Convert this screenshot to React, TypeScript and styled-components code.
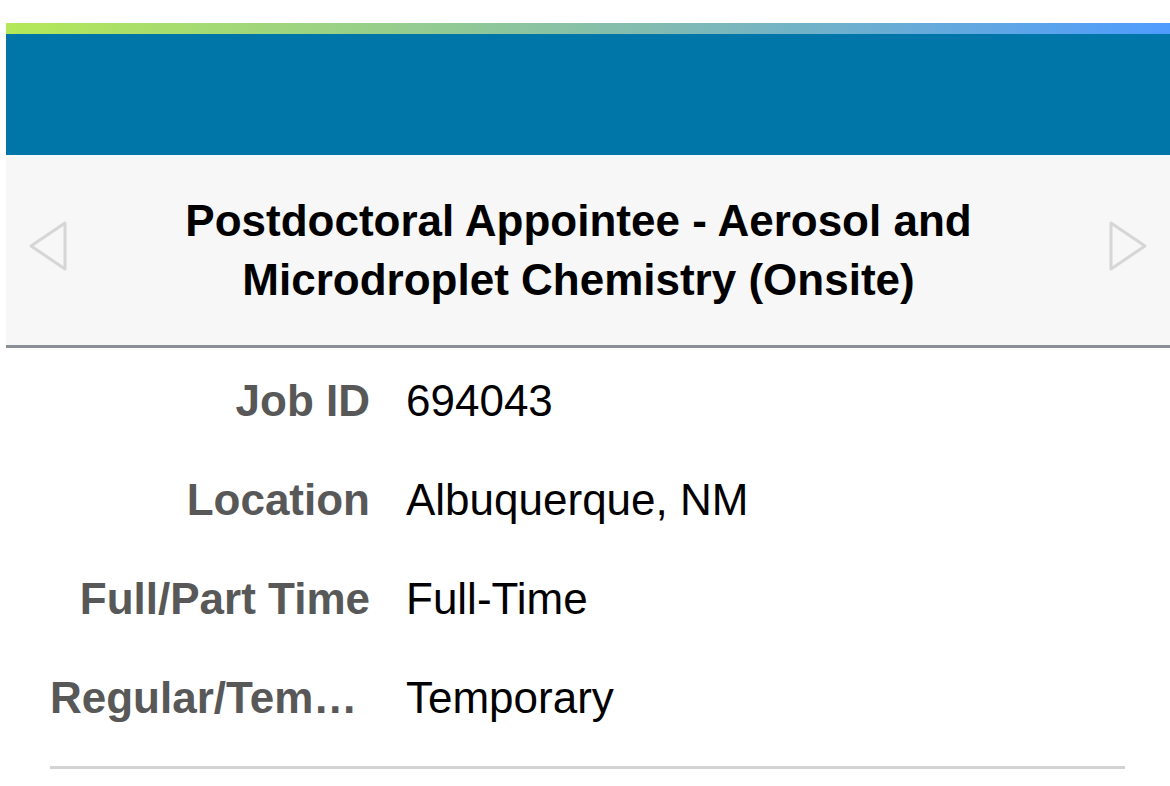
import React from 'react'
import styled, { createGlobalStyle } from 'styled-components'

const GlobalStyle = createGlobalStyle`
  html, body {
    margin: 0;
    padding: 0;
    background: #ffffff;
  }
  body {
    font-family: "Liberation Sans", Arial, Helvetica, sans-serif;
    color: #000;
  }
`

const Page = styled.div`
  padding: 23px 0 0 6px;
  width: 1170px;
  box-sizing: border-box;
`

const AccentBar = styled.div`
  height: 11px;
  background: linear-gradient(to right, #b4e858, #82bcb0 55%, #4e9cff);
`

const Banner = styled.header`
  height: 121px;
  background: #0076a8;
`

const TitlePanel = styled.section`
  display: grid;
  grid-template-columns: 94px 1fr 113px;
  align-items: center;
  height: 190px;
  background: #f7f7f7;
  border-bottom: 3px solid #8a8f96;
`

const NavArrow = styled.button<{ $offset: number }>`
  justify-self: start;
  margin-left: ${(p) => p.$offset}px;
  margin-top: -8px;
  padding: 0;
  border: 0;
  background: none;
  line-height: 0;
  cursor: pointer;
`

const Title = styled.h1`
  margin: 0;
  text-align: center;
  font-size: 44px;
  line-height: 59px;
  font-weight: 700;
  color: #000;
`

const DetailList = styled.dl`
  display: flex;
  flex-direction: column;
  gap: 49px;
  margin: 0;
  padding: 28px 44px 0 44px;
`

const Row = styled.div`
  display: grid;
  grid-template-columns: 320px 1fr;
  column-gap: 36px;
  font-size: 44px;
  line-height: 50px;
`

const Label = styled.dt`
  margin: 0;
  font-weight: 700;
  color: #585858;
  text-align: right;
  white-space: nowrap;
  overflow: hidden;
  text-overflow: ellipsis;
`

const Value = styled.dd`
  margin: 0;
  color: #000;
`

const Divider = styled.hr`
  height: 3px;
  margin: 43px 45px 0 44px;
  border: 0;
  background: #d3d3d3;
`

const Triangle = ({ dir }: { dir: 'left' | 'right' }) => (
  <svg width="38" height="50" viewBox="0 0 38 50">
    <polygon
      points={dir === 'left' ? '2,25 36,2 36,48' : '2,2 2,48 36,25'}
      fill="none"
      stroke="#d6d6d6"
      strokeWidth="3"
      strokeLinejoin="round"
    />
  </svg>
)

const details = [
  { label: 'Job ID', value: '694043' },
  { label: 'Location', value: 'Albuquerque, NM' },
  { label: 'Full/Part Time', value: 'Full-Time' },
  { label: 'Regular/Temporary', value: 'Temporary' },
]

export default function App() {
  return (
    <>
      <GlobalStyle />
      <Page>
        <AccentBar />
        <Banner />
        <TitlePanel>
          <NavArrow $offset={23} aria-label="Previous job">
            <Triangle dir="left" />
          </NavArrow>
          <Title>
            Postdoctoral Appointee - Aerosol and
            <br />
            Microdroplet Chemistry (Onsite)
          </Title>
          <NavArrow $offset={52} aria-label="Next job">
            <Triangle dir="right" />
          </NavArrow>
        </TitlePanel>
        <DetailList>
          {details.map((d) => (
            <Row key={d.label}>
              <Label>{d.label}</Label>
              <Value>{d.value}</Value>
            </Row>
          ))}
        </DetailList>
        <Divider />
      </Page>
    </>
  )
}
